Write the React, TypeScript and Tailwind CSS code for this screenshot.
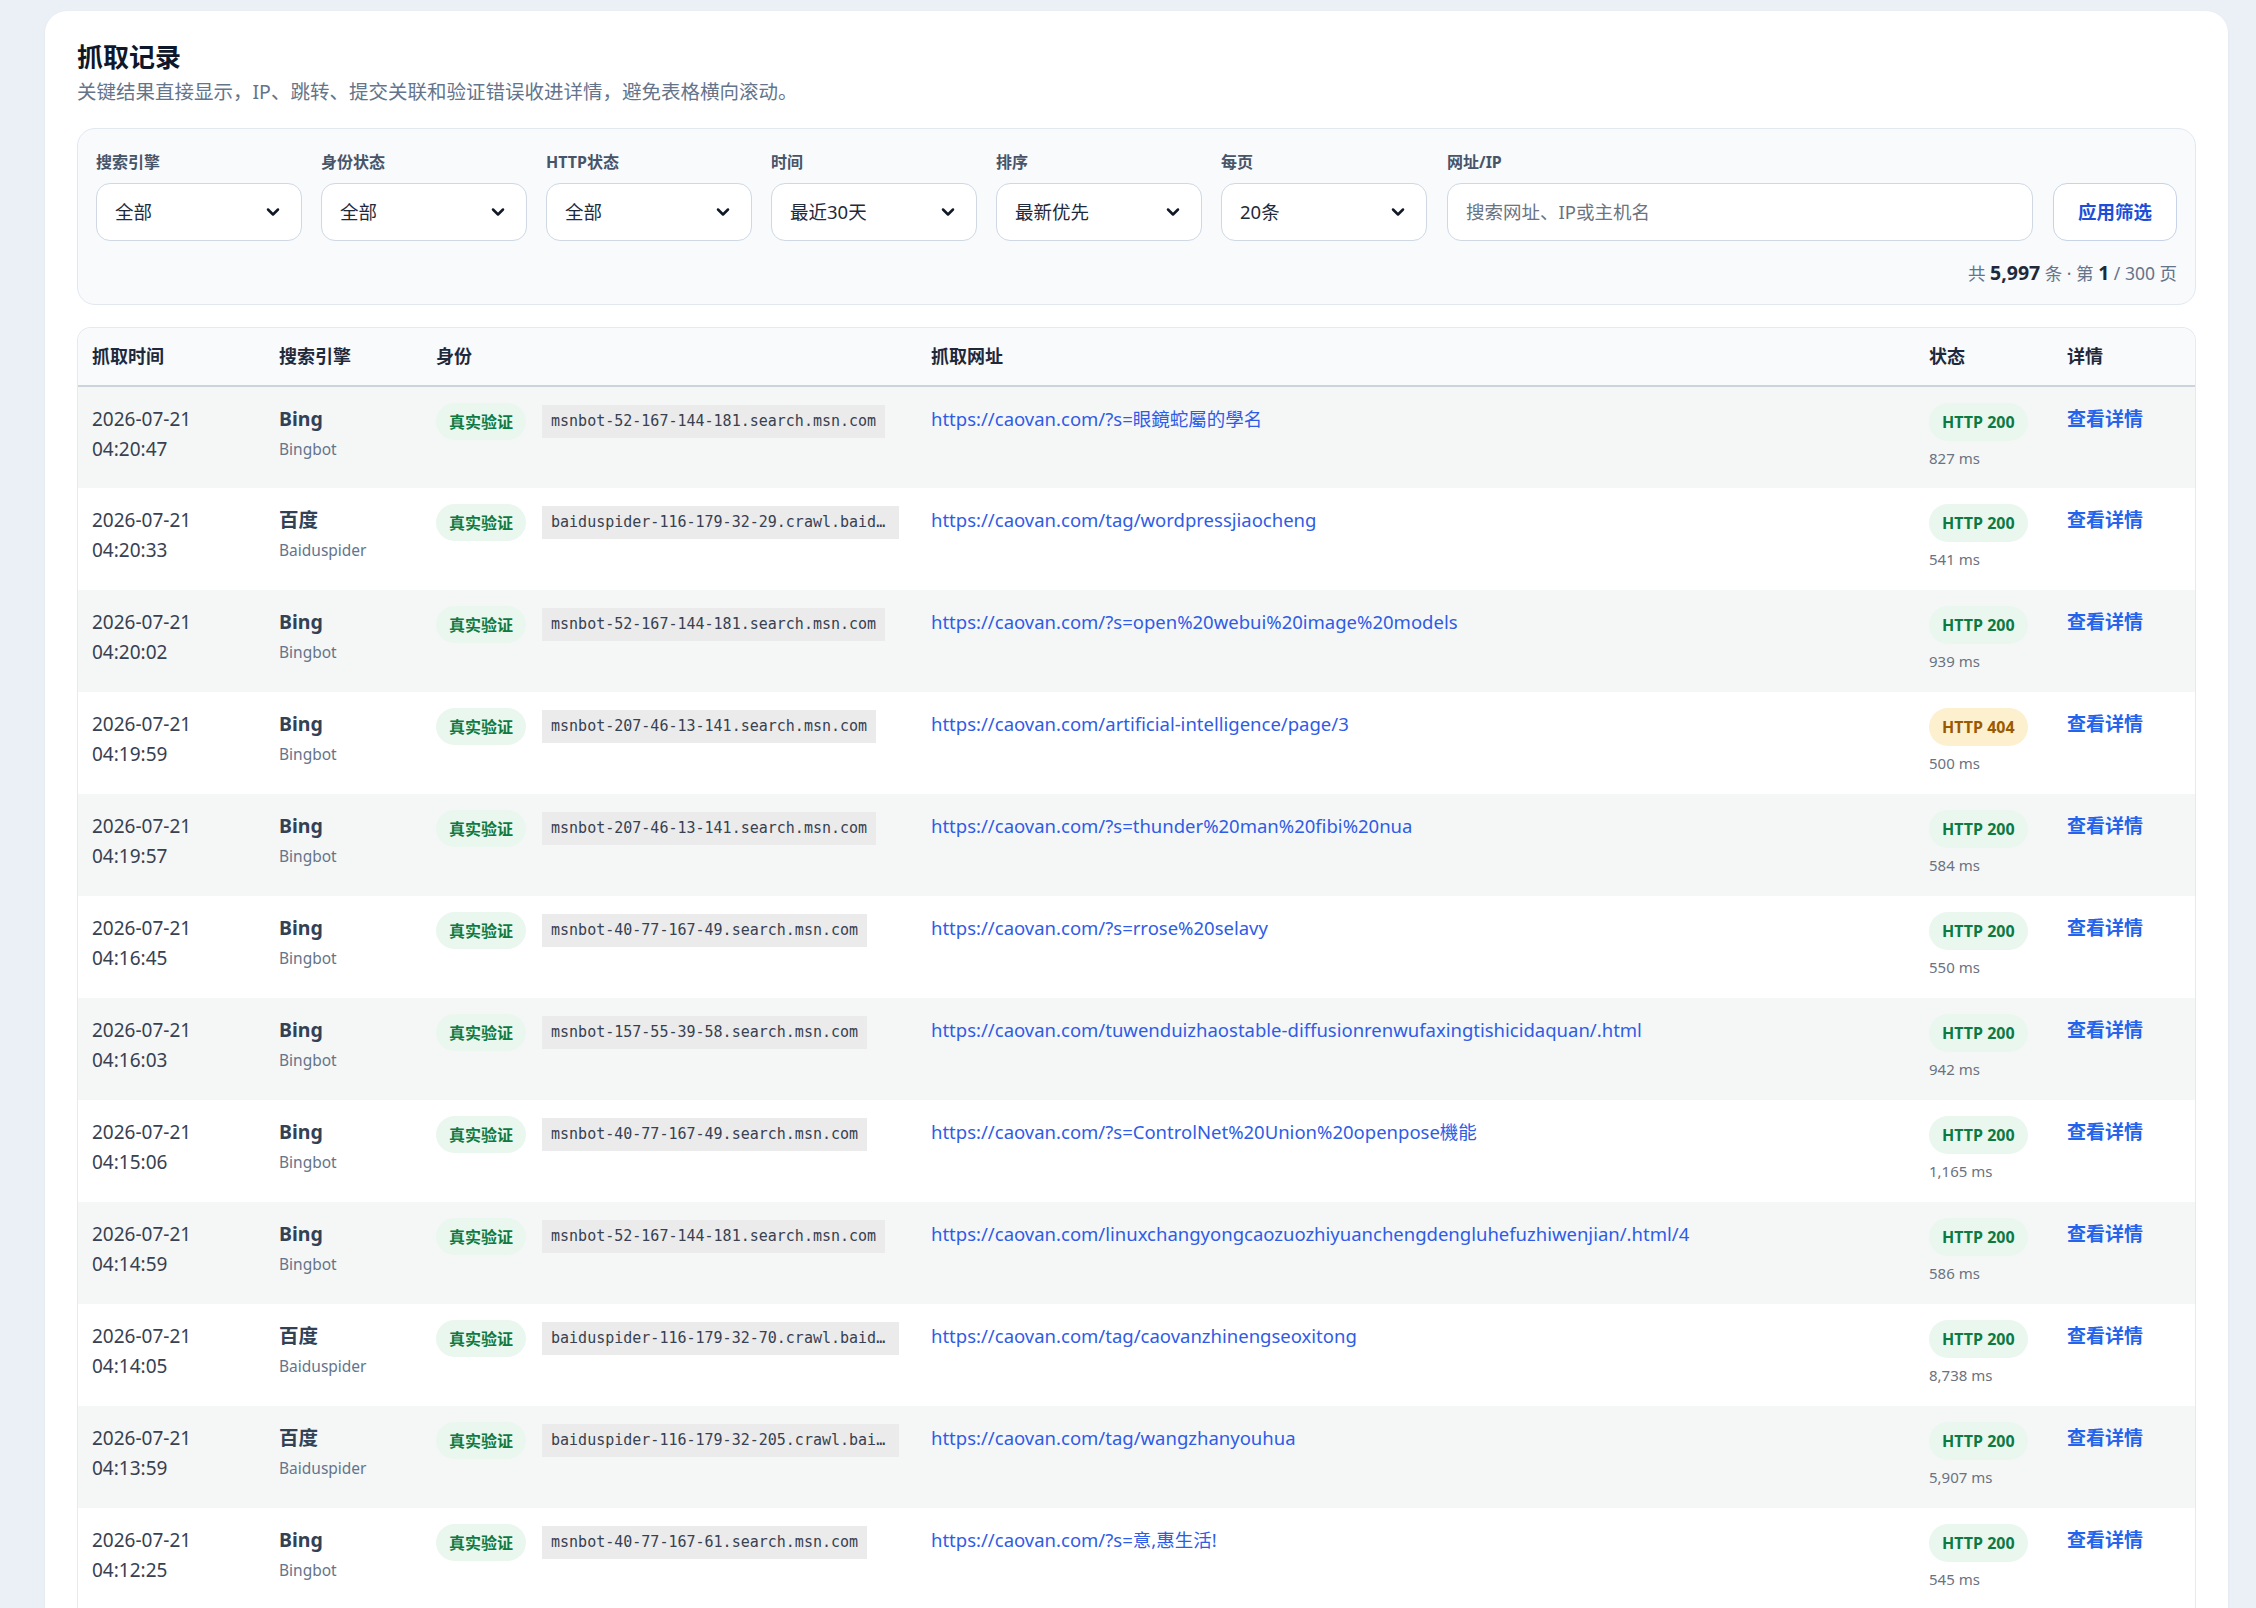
import { ChevronDown } from "lucide-react";

type Row = {
  date: string;
  time: string;
  engine: string;
  bot: string;
  host: string;
  url: string;
  status: number;
  ms: string;
};

const rows: Row[] = [
  { date: "2026-07-21", time: "04:20:47", engine: "Bing", bot: "Bingbot", host: "msnbot-52-167-144-181.search.msn.com", url: "https://caovan.com/?s=眼鏡蛇屬的學名", status: 200, ms: "827 ms" },
  { date: "2026-07-21", time: "04:20:33", engine: "百度", bot: "Baiduspider", host: "baiduspider-116-179-32-29.crawl.baidu.com", url: "https://caovan.com/tag/wordpressjiaocheng", status: 200, ms: "541 ms" },
  { date: "2026-07-21", time: "04:20:02", engine: "Bing", bot: "Bingbot", host: "msnbot-52-167-144-181.search.msn.com", url: "https://caovan.com/?s=open%20webui%20image%20models", status: 200, ms: "939 ms" },
  { date: "2026-07-21", time: "04:19:59", engine: "Bing", bot: "Bingbot", host: "msnbot-207-46-13-141.search.msn.com", url: "https://caovan.com/artificial-intelligence/page/3", status: 404, ms: "500 ms" },
  { date: "2026-07-21", time: "04:19:57", engine: "Bing", bot: "Bingbot", host: "msnbot-207-46-13-141.search.msn.com", url: "https://caovan.com/?s=thunder%20man%20fibi%20nua", status: 200, ms: "584 ms" },
  { date: "2026-07-21", time: "04:16:45", engine: "Bing", bot: "Bingbot", host: "msnbot-40-77-167-49.search.msn.com", url: "https://caovan.com/?s=rrose%20selavy", status: 200, ms: "550 ms" },
  { date: "2026-07-21", time: "04:16:03", engine: "Bing", bot: "Bingbot", host: "msnbot-157-55-39-58.search.msn.com", url: "https://caovan.com/tuwenduizhaostable-diffusionrenwufaxingtishicidaquan/.html", status: 200, ms: "942 ms" },
  { date: "2026-07-21", time: "04:15:06", engine: "Bing", bot: "Bingbot", host: "msnbot-40-77-167-49.search.msn.com", url: "https://caovan.com/?s=ControlNet%20Union%20openpose機能", status: 200, ms: "1,165 ms" },
  { date: "2026-07-21", time: "04:14:59", engine: "Bing", bot: "Bingbot", host: "msnbot-52-167-144-181.search.msn.com", url: "https://caovan.com/linuxchangyongcaozuozhiyuanchengdengluhefuzhiwenjian/.html/4", status: 200, ms: "586 ms" },
  { date: "2026-07-21", time: "04:14:05", engine: "百度", bot: "Baiduspider", host: "baiduspider-116-179-32-70.crawl.baidu.com", url: "https://caovan.com/tag/caovanzhinengseoxitong", status: 200, ms: "8,738 ms" },
  { date: "2026-07-21", time: "04:13:59", engine: "百度", bot: "Baiduspider", host: "baiduspider-116-179-32-205.crawl.baidu.com", url: "https://caovan.com/tag/wangzhanyouhua", status: 200, ms: "5,907 ms" },
  { date: "2026-07-21", time: "04:12:25", engine: "Bing", bot: "Bingbot", host: "msnbot-40-77-167-61.search.msn.com", url: "https://caovan.com/?s=意,惠生活!", status: 200, ms: "545 ms" },
];

const filters = [
  { label: "搜索引擎", value: "全部" },
  { label: "身份状态", value: "全部" },
  { label: "HTTP状态", value: "全部" },
  { label: "时间", value: "最近30天" },
  { label: "排序", value: "最新优先" },
  { label: "每页", value: "20条" },
];

function SelectBox({ label, value }: { label: string; value: string }) {
  return (
    <div className="flex w-[206px] flex-col gap-[11px]">
      <span className="text-[16px] leading-[20px] font-bold text-[#475569]">{label}</span>
      <div className="flex h-[58px] items-center justify-between rounded-[14px] border border-[#cfd8e3] bg-white pl-[18px] pr-[18px]">
        <span className="text-[18.5px] text-[#1e293b]">{value}</span>
        <ChevronDown size={20} strokeWidth={3} className="text-[#111827]" />
      </div>
    </div>
  );
}

export default function App() {
  return (
    <div className="min-h-screen bg-[#ebeff6] pl-[45px] pr-[28px] pt-[11px] font-['Noto_Sans','Noto_Sans_CJK_SC',sans-serif]">
      <div className="rounded-t-[22px] bg-white px-[32px] pt-[29px] pb-[40px] shadow-[0_1px_3px_rgba(15,23,42,0.05)]">
        <h1 className="text-[26px] leading-[34px] font-bold text-[#0f172a]">抓取记录</h1>
        <p className="mt-1 text-[19.5px] leading-[28px] text-[#64748b]">
          关键结果直接显示，IP、跳转、提交关联和验证错误收进详情，避免表格横向滚动。
        </p>

        {/* filters */}
        <div className="mt-[22px] rounded-[18px] border border-[#e2e8f0] bg-[#f8fafc] px-[18px] pt-[23px] pb-[19px]">
          <div className="flex items-end gap-[19px]">
            {filters.map((f) => (
              <SelectBox key={f.label} label={f.label} value={f.value} />
            ))}
            <div className="flex flex-1 flex-col gap-[11px] pl-px">
              <span className="text-[16px] leading-[20px] font-bold text-[#475569]">网址/IP</span>
              <div className="flex h-[58px] items-center rounded-[14px] border border-[#cfd8e3] bg-white px-[18px]">
                <span className="text-[18.5px] text-[#6b7280]">搜索网址、IP或主机名</span>
              </div>
            </div>
            <button className="ml-px flex h-[58px] w-[124px] items-center justify-center rounded-[14px] border border-[#c7d3e6] bg-white text-[18.5px] font-bold text-[#1d4ed8]">
              应用筛选
            </button>
          </div>
          <div className="mt-[20px] flex justify-end text-[17.5px] leading-[24px] text-[#64748b]">
            <span>
              共 <b className="text-[19.5px] font-bold text-[#1e293b]">5,997</b> 条 · 第{" "}
              <b className="text-[19.5px] font-bold text-[#1e293b]">1</b> / 300 页
            </span>
          </div>
        </div>

        {/* table */}
        <div className="mt-[22px] overflow-hidden rounded-t-[14px] border-x border-t border-[#e5e9f0]">
          <table className="w-full table-fixed border-collapse">
            <colgroup>
              <col className="w-[187px]" />
              <col className="w-[157px]" />
              <col className="w-[495px]" />
              <col />
              <col className="w-[138px]" />
              <col className="w-[142px]" />
            </colgroup>
            <thead>
              <tr className="h-[58px] border-b-2 border-[#cdd3da] bg-[#f8fafc] text-left text-[18px] font-bold text-[#1e293b]">
                <th className="px-[14px]">抓取时间</th>
                <th className="px-[14px]">搜索引擎</th>
                <th className="px-[14px]">身份</th>
                <th className="px-[14px]">抓取网址</th>
                <th className="px-[14px]">状态</th>
                <th className="px-[14px]">详情</th>
              </tr>
            </thead>
            <tbody>
              {rows.map((r, i) => (
                <tr key={i} className={`h-[102px] ${i % 2 === 0 ? "bg-[#f5f7f7]" : "bg-white"}`}>
                  <td className="px-[14px] pt-[17px] align-top text-[19px] leading-[30px] text-[#374151]">
                    <div>{r.date}</div>
                    <div>{r.time}</div>
                  </td>
                  <td className="px-[14px] pt-[17px] align-top">
                    <div className="text-[19.5px] leading-[30px] font-bold text-[#334155]">{r.engine}</div>
                    <div className="mt-[3px] text-[15.5px] leading-[24px] text-[#64748b]">{r.bot}</div>
                  </td>
                  <td className="px-[14px] pt-[16px] align-top">
                    <div className="flex items-center gap-[16px]">
                      <span className="flex h-[37px] shrink-0 items-center rounded-full bg-[#e9f7ef] px-[13px] text-[16px] font-bold text-[#0e7a43]">
                        真实验证
                      </span>
                      <span className="block max-w-[357px] truncate bg-[#ebebeb] px-[9px] font-['DejaVu_Sans_Mono',monospace] text-[15px] leading-[33px] text-[#374151]">
                        {r.host}
                      </span>
                    </div>
                  </td>
                  <td className="px-[14px] pt-[17px] align-top">
                    <a className="text-[18.5px] leading-[30px] text-[#2f5ce6]">{r.url}</a>
                  </td>
                  <td className="px-[14px] pt-[16px] align-top">
                    <span
                      className={`inline-flex h-[38px] items-center rounded-full px-[13px] text-[16px] font-bold ${
                        r.status === 200 ? "bg-[#e9f7ef] text-[#0e7a43]" : "bg-[#fdf0cf] text-[#9a5a00]"
                      }`}
                    >
                      HTTP {r.status}
                    </span>
                    <div className="mt-[5px] text-[15px] leading-[24px] text-[#6b7280]">{r.ms}</div>
                  </td>
                  <td className="px-[14px] pt-[17px] align-top">
                    <a className="text-[19px] leading-[30px] font-bold text-[#2563eb]">查看详情</a>
                  </td>
                </tr>
              ))}
            </tbody>
          </table>
        </div>
      </div>
    </div>
  );
}
